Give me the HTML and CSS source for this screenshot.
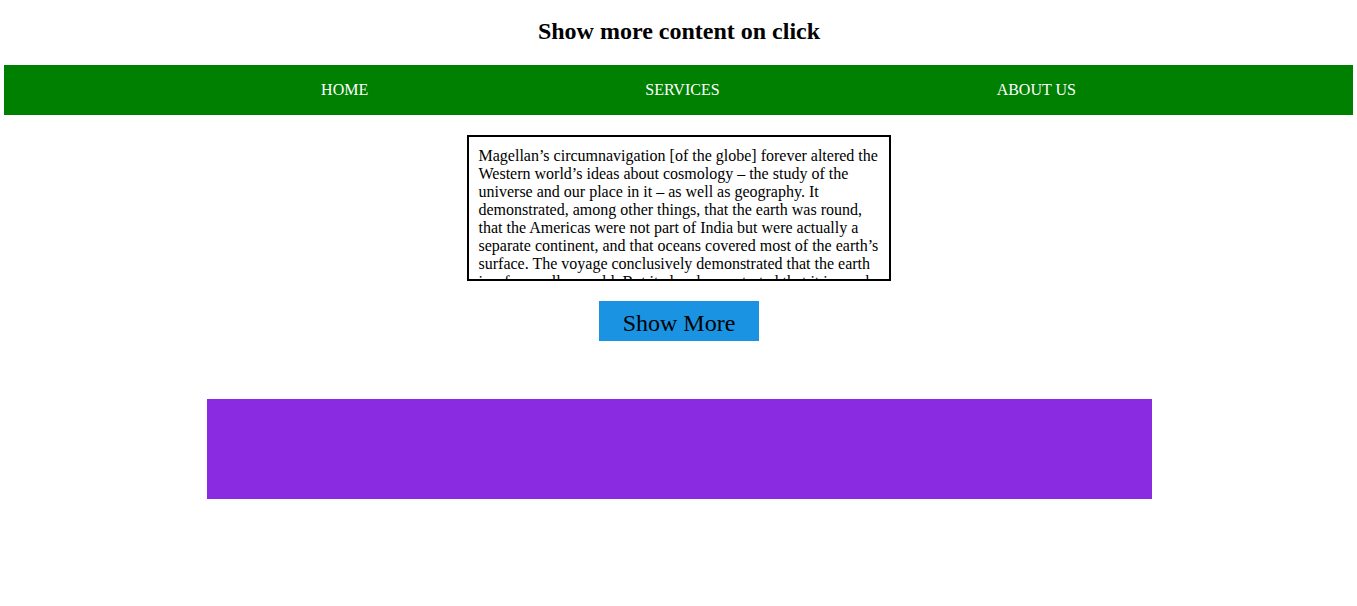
FILE: index.html
```html
<!DOCTYPE html>
<html>
<head>
<meta charset="utf-8">
<title>Show more content on click</title>
<link rel="stylesheet" href="styles.css">
</head>
<body>
  <h2 class="title">Show more content on click</h2>
  <nav class="nav">
    <ul class="nav-list">
      <li class="nav-item">HOME</li>
      <li class="nav-item">SERVICES</li>
      <li class="nav-item">ABOUT US</li>
    </ul>
  </nav>
  <div class="content">
    <div class="text-box">
      Magellan’s circumnavigation [of the globe] forever altered the Western world’s ideas about cosmology – the study of the universe and our place in it – as well as geography. It demonstrated, among other things, that the earth was round, that the Americas were not part of India but were actually a separate continent, and that oceans covered most of the earth’s surface. The voyage conclusively demonstrated that the earth is a far smaller world. But it also demonstrated that it is much larger than anyone had imagined before.
    </div>
    <button class="show-more">Show More</button>
    <div class="panel"></div>
  </div>
</body>
</html>
```
FILE: styles.css
```css
html, body {
  background: #ffffff;
}
body {
  margin: 0 4px;
  font-family: "Liberation Serif", "Times New Roman", serif;
  color: #000000;
}
.title {
  margin: 0;
  padding: 17px 0 0 1px;
  height: 48px;
  font-size: 24px;
  line-height: 28px;
  font-weight: bold;
  text-align: center;
}
.nav {
  background: #008000;
  height: 50px;
}
.nav-list {
  list-style: none;
  margin: 0;
  padding: 0 0 0 40px;
  height: 100%;
  display: flex;
  justify-content: space-evenly;
  align-items: center;
}
.nav-item {
  color: #ffffff;
  font-size: 16px;
  line-height: 18px;
}
.content {
  display: flex;
  flex-direction: column;
  align-items: center;
  padding-top: 20px;
}
.text-box {
  width: 400px;
  height: 122px;
  padding: 10px;
  border: 2px solid #000000;
  overflow: hidden;
  font-size: 16px;
  line-height: 18px;
}
.show-more {
  margin-top: 20px;
  width: 160px;
  height: 40px;
  border: none;
  background: #1a94e2;
  color: #000000;
  font-family: "Liberation Serif", "Times New Roman", serif;
  font-size: 24px;
  padding: 4px 0 0 1px;
}
.panel {
  margin-top: 58px;
  margin-left: 2px;
  width: 945px;
  height: 100px;
  background: #8a2be2;
}
```
